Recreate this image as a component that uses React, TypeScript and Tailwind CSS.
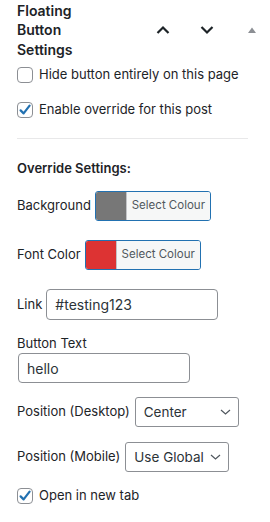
import React from "react";

function Check({ checked }: { checked: boolean }) {
  return (
    <span className="flex h-[16px] w-[16px] shrink-0 items-center justify-center rounded-[4px] border border-[#8c8f94] bg-white">
      {checked && (
        <svg width="14" height="14" viewBox="0 0 14 14">
          <path d="M2.6 7.4 L5.6 10.4 L11.6 2.6" fill="none" stroke="#2271b1" strokeWidth="2.2" strokeLinecap="round" strokeLinejoin="round" />
        </svg>
      )}
    </span>
  );
}

function ColorBtn({ color }: { color: string }) {
  return (
    <div className="flex h-[30px] w-[116px] overflow-hidden rounded-[3px] border border-[#2271b1]">
      <div className="w-[31px] shrink-0 border-r border-[#c3c4c7]" style={{ background: color }} />
      <div className="flex flex-1 items-center justify-center bg-[#f6f7f7] text-[11.5px] text-[#50575e]">Select Colour</div>
    </div>
  );
}

function Select({ value, w }: { value: string; w: string }) {
  return (
    <div className={`flex h-[30px] ${w} items-center justify-between rounded-[3px] border border-[#8c8f94] bg-white pl-[8px] pr-[7px] text-[13.5px] text-[#2c3338]`}>
      <span>{value}</span>
      <svg width="11" height="8" viewBox="0 0 11 8">
        <path d="M1 2 L5.5 6 L10 2" fill="none" stroke="#50575e" strokeWidth="1.2" />
      </svg>
    </div>
  );
}

export default function App() {
  return (
    <div className="h-[522px] w-[270px] bg-white text-[13px] text-[#1d2327]" style={{ fontFamily: "Inter, 'Liberation Sans', sans-serif" }}>
      <div className="flex h-[62px] items-start pl-[17px]">
        <div className="w-[90px] pt-[0.5px] text-[14px] font-semibold leading-[19.5px]">Floating Button Settings</div>
        <div className="flex flex-1 items-center pt-[25px]">
          <svg className="ml-[49px]" width="14" height="10" viewBox="0 0 14 10">
            <path d="M1.5 8 L7 2.5 L12.5 8" fill="none" stroke="#1d2327" strokeWidth="2.2" />
          </svg>
          <svg className="ml-[30px]" width="14" height="10" viewBox="0 0 14 10">
            <path d="M1.5 2 L7 7.5 L12.5 2" fill="none" stroke="#1d2327" strokeWidth="2.2" />
          </svg>
          <svg className="ml-[34px]" width="8" height="6" viewBox="0 0 8 6">
            <path d="M0 6 L4 0.5 L8 6 Z" fill="#8c8f94" />
          </svg>
        </div>
      </div>

      <div className="ml-[17px] mt-[5px] flex h-[16px] items-center gap-[6px]">
        <Check checked={false} />
        <span>Hide button entirely on this page</span>
      </div>
      <div className="ml-[17px] mt-[19px] flex h-[16px] items-center gap-[6px]">
        <Check checked={true} />
        <span>Enable override for this post</span>
      </div>

      <div className="ml-[17px] mr-[22px] mt-[20px] h-px bg-[#e8e8e9]" />

      <div className="ml-[17px] mt-[20px] font-semibold leading-[18px]">Override Settings:</div>

      <div className="ml-[17px] mt-[14px] flex items-center gap-[4px]">
        <span>Background</span>
        <ColorBtn color="#777777" />
      </div>
      <div className="ml-[17px] mt-[19px] flex items-center gap-[4px]">
        <span>Font Color</span>
        <ColorBtn color="#dd3333" />
      </div>

      <div className="ml-[17px] mt-[19px] flex items-center gap-[4px]">
        <span>Link</span>
        <div className="flex h-[31px] w-[172px] items-center rounded-[4px] border border-[#8c8f94] pl-[8px] text-[14px] text-[#2c3338]">#testing123</div>
      </div>

      <div className="ml-[17px] mt-[15px] leading-[16px]">Button Text</div>
      <div className="ml-[18px] mt-[2px] flex h-[30px] w-[172px] items-center rounded-[4px] border border-[#8c8f94] pl-[8px] text-[14px] text-[#2c3338]">hello</div>

      <div className="ml-[17px] mt-[14px] flex items-center gap-[5px]">
        <span>Position (Desktop)</span>
        <Select value="Center" w="w-[104px]" />
      </div>
      <div className="ml-[17px] mt-[15px] flex items-center gap-[5px]">
        <span>Position (Mobile)</span>
        <Select value="Use Global" w="w-[104px]" />
      </div>

      <div className="ml-[17px] mt-[16px] flex h-[16px] items-center gap-[6px]">
        <Check checked={true} />
        <span>Open in new tab</span>
      </div>
    </div>
  );
}
